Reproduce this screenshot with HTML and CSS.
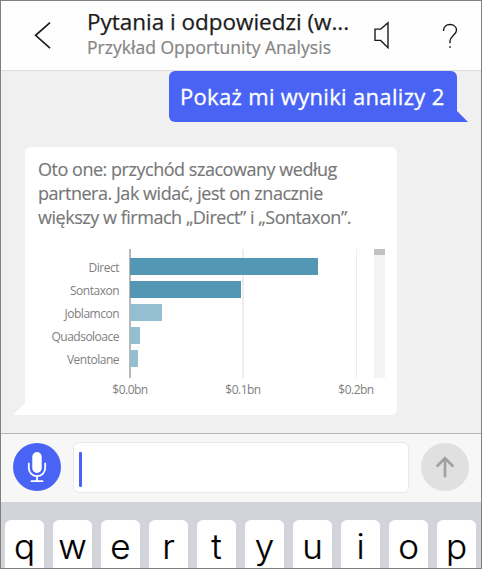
FILE: index.html
```html
<!DOCTYPE html>
<html lang="pl">
<head>
<meta charset="utf-8">
<title>Pytania i odpowiedzi</title>
<link rel="stylesheet" href="styles.css">
</head>
<body>
<main class="phone">
  <header class="header">
    <svg class="back" viewBox="0 0 18 28" fill="none" stroke="#1c1c1c" stroke-width="1.7"><path d="M16 1.6 1.6 14.3 16 27.2"/></svg>
    <div class="titles">
      <h1 class="title">Pytania i odpowiedzi (w...</h1>
      <p class="subtitle">Przykład Opportunity Analysis</p>
    </div>
    <svg class="speaker" viewBox="0 0 16 28" fill="none" stroke="#1c1c1c" stroke-width="1.4"><path d="M14 1.8V26.7L6.7 19.4H1V8.1H6.7Z"/></svg>
    <svg class="help" viewBox="0 0 16 27" fill="none" stroke="#1c1c1c" stroke-width="1.4"><path d="M1.5 8C1.5 4 4 1.5 8 1.5S14.5 4 14.5 7.2C14.5 12 8 13 8 18V20.3"/><path d="M7.2 24H8.8"/></svg>
  </header>
  <section class="chat">
    <div class="question">Pokaż mi wyniki analizy 2</div>
    <article class="answer">
      <p class="reply"><span class="line">Oto one: przychód szacowany według</span><span class="line">partnera. Jak widać, jest on znacznie</span><span class="line">większy w firmach „Direct” i „Sontaxon”.</span></p>
      <div class="chart">
        <ul class="names"><li>Direct</li><li>Sontaxon</li><li>Joblamcon</li><li>Quadsoloace</li><li>Ventolane</li></ul>
        <div class="plot">
          <div class="bar dark" style="width:188px"></div>
          <div class="bar dark" style="width:111px"></div>
          <div class="bar" style="width:32px"></div>
          <div class="bar" style="width:10px"></div>
          <div class="bar" style="width:8px"></div>
        </div>
        <div class="scroll"><div class="thumb"></div></div>
      </div>
      <div class="axis"><span>$0.0bn</span><span>$0.1bn</span><span>$0.2bn</span></div>
    </article>
  </section>
  <section class="composer">
    <div class="mic"><svg width="20" height="32" viewBox="0 0 20 32" fill="none" stroke="#fff" stroke-width="1.8"><rect x="5.3" y="1" width="9.4" height="21" rx="4.7" fill="#fff" stroke="none"/><path d="M1.8 12.5V17a8.2 8.2 0 0 0 16.4 0V12.5M10 25V30M4.5 30.2H15.5" stroke-linecap="round"/></svg></div>
    <div class="field"><div class="caret"></div></div>
    <div class="send"><svg width="20" height="24" viewBox="0 0 20 24" fill="none" stroke="#a0a0a0" stroke-width="2.7"><path d="M10 21.2V3M2.5 10.7 10 3.2 17.5 10.7" stroke-linecap="round"/></svg></div>
  </section>
  <section class="keyboard"><span>q</span><span>w</span><span>e</span><span>r</span><span>t</span><span>y</span><span>u</span><span>i</span><span>o</span><span>p</span></section>
</main>
</body>
</html>
```
FILE: styles.css
```css
* { box-sizing: border-box; }
body { margin: 0; overflow: hidden; font-family: "Open Sans", "Noto Sans", sans-serif; }
h1, p, ul { margin: 0; padding: 0; font-weight: 400; }
.phone { width: 482px; height: 569px; border: 1px solid #808080; display: flex; flex-direction: column; overflow: hidden; background: #f0f0f0; }
.header { height: 70px; flex: none; display: flex; align-items: flex-start; background: #fefefe; border-bottom: 1px solid #dcdcdc; padding-left: 33px; }
.back { width: 18px; height: 28px; margin-top: 20px; }
.titles { width: 287px; margin-left: 35px; padding-top: 6px; white-space: nowrap; }
.title { font-size: 22.5px; line-height: 29px; color: #1c1c1c; letter-spacing: -0.02px; -webkit-text-stroke: 0.25px #1c1c1c; }
.subtitle { font-size: 17.5px; line-height: 22px; color: #858585; letter-spacing: 0.02px; -webkit-text-stroke: 0.2px #858585; }
.speaker { width: 16px; height: 28px; margin-top: 20px; }
.help { width: 16px; height: 27px; margin: 22px 0 0 52px; }
.chat { height: 362px; flex: none; display: flex; flex-direction: column; }
.question { position: relative; align-self: flex-end; width: 288px; height: 51px; margin-right: 24px; padding-left: 11px; border-radius: 6px 6px 0 6px; background: #4964f5; color: #fff; font-size: 22px; line-height: 51px; letter-spacing: 0.32px; -webkit-text-stroke: 0.3px #fff; white-space: nowrap; }
.question::after { content: ""; position: absolute; left: 287px; bottom: 0; width: 12px; height: 12px; background: #4964f5; clip-path: polygon(0 0, 100% 100%, 0 100%); }
.answer { position: relative; width: 372px; height: 268px; margin: 25px 0 0 24px; padding: 10px 12px 0 12px; border-radius: 6px 6px 6px 0; background: #fff; }
.answer::after { content: ""; position: absolute; left: -12px; bottom: 0; width: 12px; height: 12px; background: #fff; clip-path: polygon(100% 0, 100% 100%, 0 100%); }
.reply { padding-left: 1px; color: #777; font-size: 18px; line-height: 24px; white-space: nowrap; -webkit-text-stroke: 0.15px #777; }
.line { display: block; letter-spacing: -0.47px; }
.chart { display: flex; height: 129px; margin-top: 20px; }
.names { width: 82px; padding-top: 7px; list-style: none; text-align: right; color: #808080; font-size: 12px; line-height: 23px; letter-spacing: -0.5px; }
.plot { width: 245px; margin-left: 10px; padding-top: 9px; border-left: 2px solid #b8b8b8; background: linear-gradient(#eee, #eee) 111px 0 / 2px 100% no-repeat, linear-gradient(#eee, #eee) 225px 0 / 1px 100% no-repeat; }
.bar { height: 17px; margin: 0 0 6px -1px; background: #94bfd1; }
.dark { background: #5497b5; }
.scroll { width: 11px; background: #f3f3f3; }
.thumb { height: 6px; background: #c2c2c2; }
.axis { display: flex; margin: 3px 0 0 63px; color: #808080; font-size: 12px; line-height: 18px; letter-spacing: -0.5px; }
.axis span { width: 60px; margin-right: 53px; flex: none; text-align: center; }
.composer { height: 69px; flex: none; display: flex; align-items: flex-start; background: #f7f7f7; border-top: 1px solid #b8b8b8; padding: 9px 12px 0; }
.mic, .send { width: 48px; height: 48px; border-radius: 50%; background: #4964f5; display: flex; align-items: center; justify-content: center; }
.send { background: #e0e0e0; }
.field { width: 336px; height: 51px; margin: -1px 12px 0; padding: 9px 5px; background: #fff; border: 1px solid #e8e8e8; border-radius: 6px; }
.caret { width: 3px; height: 35px; border-radius: 1px; background: #4964f5; }
.keyboard { flex: 1; display: flex; gap: 9px; background: #d1d4d9; padding: 18px 0 0 4px; font-family: Inter, sans-serif; font-size: 35px; font-weight: 300; color: #000; }
.keyboard span { width: 39px; height: 70px; flex: none; background: #fff; border-radius: 6px; text-align: center; line-height: 52px; -webkit-text-stroke: 0.2px #000; }
```
